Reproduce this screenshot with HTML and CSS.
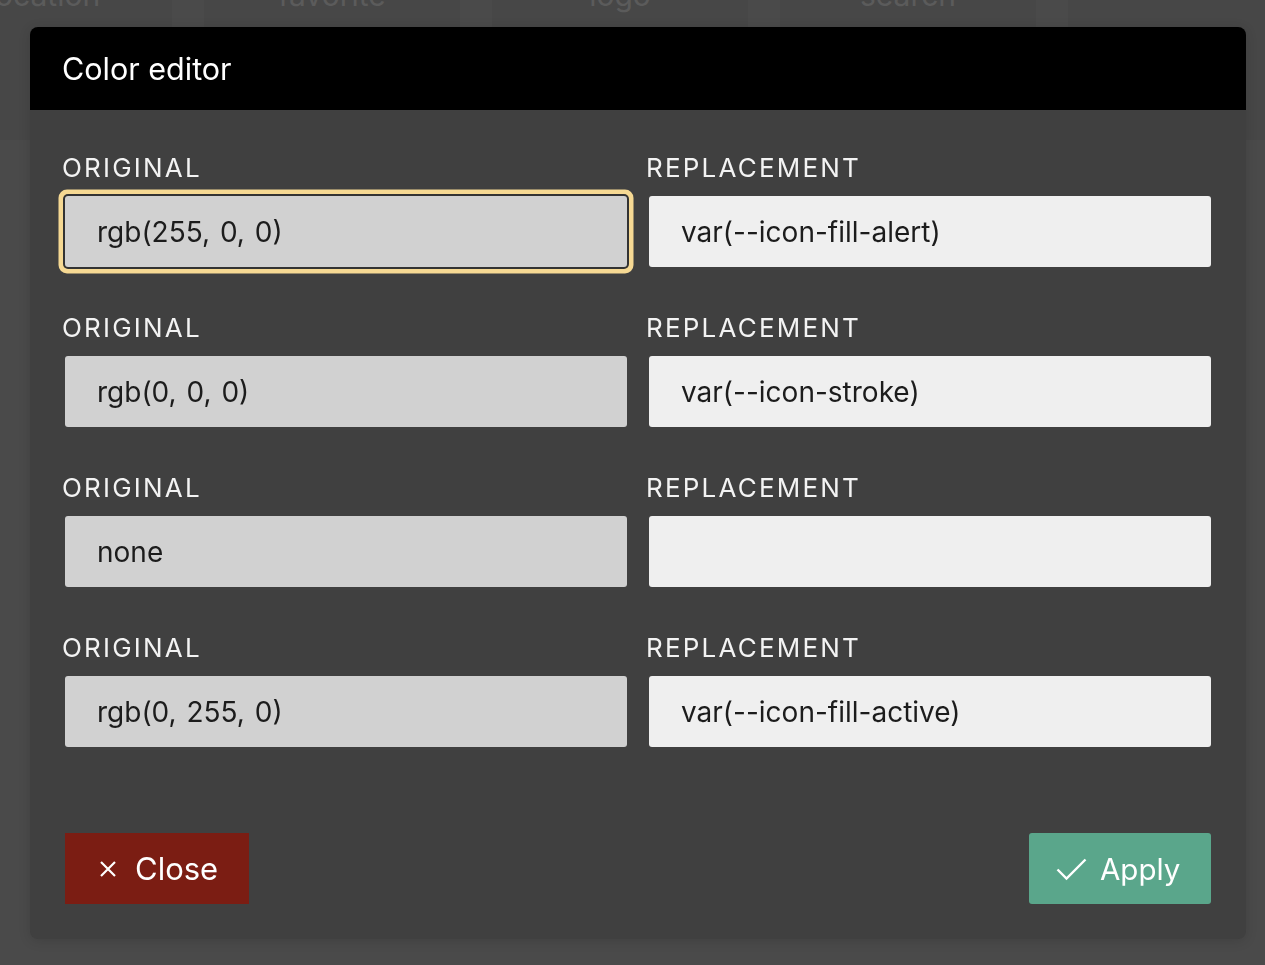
FILE: index.html
```html
<!DOCTYPE html>
<html lang="en">
<head>
<meta charset="utf-8">
<title>Color editor</title>
<link rel="stylesheet" href="styles.css">
</head>
<body>
<div class="backdrop">
  <div class="card"><span>location</span></div>
  <div class="card"><span>favorite</span></div>
  <div class="card"><span>logo</span></div>
  <div class="card"><span>search</span></div>
  <div class="card"><span></span></div>
</div>
<div class="overlay">
  <div class="modal">
    <div class="modal-header">Color editor</div>
    <div class="modal-body">
      <div class="grid">
        <div class="field">
          <label class="label">ORIGINAL</label>
          <div class="input original focused">rgb(255, 0, 0)</div>
        </div>
        <div class="field">
          <label class="label">REPLACEMENT</label>
          <div class="input replacement">var(--icon-fill-alert)</div>
        </div>
        <div class="field">
          <label class="label">ORIGINAL</label>
          <div class="input original">rgb(0, 0, 0)</div>
        </div>
        <div class="field">
          <label class="label">REPLACEMENT</label>
          <div class="input replacement">var(--icon-stroke)</div>
        </div>
        <div class="field">
          <label class="label">ORIGINAL</label>
          <div class="input original">none</div>
        </div>
        <div class="field">
          <label class="label">REPLACEMENT</label>
          <div class="input replacement"></div>
        </div>
        <div class="field">
          <label class="label">ORIGINAL</label>
          <div class="input original">rgb(0, 255, 0)</div>
        </div>
        <div class="field">
          <label class="label">REPLACEMENT</label>
          <div class="input replacement">var(--icon-fill-active)</div>
        </div>
      </div>
      <div class="actions">
        <button class="btn btn-close">
          <svg width="18" height="18" viewBox="0 0 18 18"><path d="M2 2 L16 16 M16 2 L2 16" stroke="#fff" stroke-width="2.2" fill="none"/></svg>
          <span>Close</span>
        </button>
        <button class="btn btn-apply">
          <svg width="31" height="24" viewBox="0 0 31 24"><path d="M1.5 12.5 L10.5 21.5 L29.5 2.5" stroke="#fff" stroke-width="2.4" fill="none"/></svg>
          <span>Apply</span>
        </button>
      </div>
    </div>
  </div>
</div>
</body>
</html>
```

FILE: styles.css
```css
html, body {
  margin: 0;
  padding: 0;
}
body {
  width: 1265px;
  height: 965px;
  overflow: hidden;
  background: #4b4b4b;
  font-family: Inter, "Liberation Sans", sans-serif;
}
.backdrop {
  display: flex;
  gap: 32px;
  margin-left: -84px;
  margin-top: -60px;
}
.card {
  flex: 0 0 256px;
  height: 200px;
  background: #474747;
  display: flex;
  align-items: flex-start;
  justify-content: center;
  padding-top: 40px;
  box-sizing: border-box;
}
.card span {
  color: #5f5f5f;
  font-size: 30px;
  line-height: 30px;
}
.overlay {
  position: fixed;
  inset: 0;
  background: rgba(72, 72, 72, 0.15);
}
.modal {
  position: absolute;
  left: 30px;
  top: 27px;
  width: 1216px;
  height: 912px;
  background: #404040;
  border-radius: 8px;
  overflow: hidden;
  display: flex;
  flex-direction: column;
  box-shadow: 0 2px 12px rgba(0,0,0,0.15);
}
.modal-header {
  background: #000;
  color: #fff;
  height: 83px;
  box-sizing: border-box;
  padding: 0 32px;
  display: flex;
  align-items: center;
  font-size: 30.5px;
}
.modal-body {
  flex: 1;
  padding: 44px 32px 35px;
  display: flex;
  flex-direction: column;
}
.grid {
  display: grid;
  grid-template-columns: 568px 568px;
  column-gap: 16px;
  row-gap: 47px;
}
.field {
  display: flex;
  flex-direction: column;
}
.label {
  color: #f3f3f3;
  font-size: 26px;
  line-height: 28px;
  height: 28px;
  margin-bottom: 14px;
  letter-spacing: 2.2px;
}
.input {
  margin: 0 3px;
  height: 71px;
  box-sizing: border-box;
  padding-left: 32px;
  display: flex;
  align-items: center;
  font-size: 28px;
  color: #1c1c1c;
  border-radius: 3px;
  letter-spacing: 0;
  word-spacing: 2px;
}
.original {
  background: #d1d1d1;
}
.replacement {
  background: #efefef;
}
.focused {
  box-shadow: 0 0 0 2px #333333, 0 0 0 6.5px #f6d993;
  border-radius: 3px;
}
.actions {
  margin-top: auto;
  display: flex;
  justify-content: space-between;
  padding: 0 3px;
}
.btn {
  height: 71px;
  border: none;
  color: #fff;
  font-family: inherit;
  font-size: 31px;
  display: flex;
  align-items: center;
  gap: 18px;
  box-sizing: border-box;
  cursor: pointer;
}
.btn-close {
  width: 184px;
  background: #7b1d13;
  padding: 0 0 0 34px;
  border-radius: 0;
}
.btn-apply {
  width: 182px;
  background: #5aa68b;
  padding: 0 0 0 27px;
  border-radius: 3px;
  gap: 13px;
  font-size: 29.5px;
}
```
